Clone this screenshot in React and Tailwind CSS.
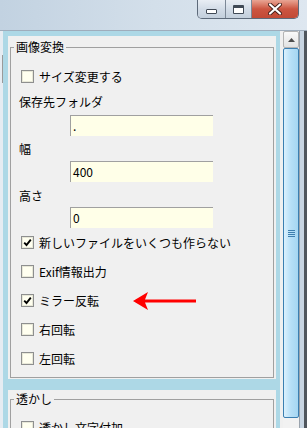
import React from 'react';

const font = { fontFamily: '"Noto Sans CJK JP", "Noto Sans", sans-serif' };

const CheckBox = ({ checked }) => (
  <span className="w-[13px] h-[13px] shrink-0 border border-[#8e8f8f] bg-[#fffff0] shadow-[inset_0_0_0_1px_#e8e8d8] flex items-center justify-center">
    {checked && (
      <svg width="9" height="9" viewBox="0 0 9 9">
        <path d="M1.2 4.6 L3.5 7 L7.8 1.6" stroke="#000" strokeWidth="1.9" fill="none" />
      </svg>
    )}
  </span>
);

const CheckRow = ({ label, checked, children }) => (
  <div className="h-[29px] flex items-center pl-[10px]">
    <CheckBox checked={checked} />
    <span className="ml-[5px]">{label}</span>
    {children}
  </div>
);

const Field = ({ value }) => (
  <div className="ml-[59px] w-[143px] h-[21px] bg-[#ffffe8] border-t border-l border-[#a0a0a0] flex items-center pl-[2px] leading-none">
    {value}
  </div>
);

const Arrow = () => (
  <svg className="ml-[34px]" width="64" height="22" viewBox="0 0 64 22">
    <polygon points="0,11 15,2 12,9.5 63,9.5 63,12.5 12,12.5 15,20" fill="#ff0000" />
  </svg>
);

const GroupPanel = ({ title, pt, pb, children }) => (
  <div className={`bg-[#f0f0f0] px-[2px] ${pt} ${pb}`}>
    <fieldset className="border border-[#a0a0a0]">
      <legend className="ml-[3px] px-[2px] leading-[16px]">{title}</legend>
      {children}
    </fieldset>
  </div>
);

export default function App() {
  return (
    <div
      className="w-[307px] h-[428px] overflow-hidden flex flex-col bg-[#dfe7f0] text-[12px] text-black"
      style={font}
    >
      {/* title bar */}
      <div className="h-[31px] shrink-0 border-b border-[#9fadbc] bg-gradient-to-r from-[#c2d2e1] via-[#d3dfea] to-[#dee7f0] flex justify-end pr-[8px]">
        <div className="flex h-[19px] border border-t-0 border-[#5d6a7a] rounded-b-[5px] overflow-hidden">
          <div className="w-[28px] bg-gradient-to-b from-[#e9eef4] via-[#d2dce7] to-[#c3cfdc] border-r border-[#7c8897] flex items-end justify-center pb-[4px]">
            <div className="w-[11px] h-[5px] bg-white border border-[#404a56] rounded-[1px]" />
          </div>
          <div className="w-[26px] bg-gradient-to-b from-[#e9eef4] via-[#d2dce7] to-[#c3cfdc] border-r border-[#7c8897] flex items-center justify-center">
            <div className="w-[11px] h-[9px] bg-white border border-[#404a56] border-t-[3px] rounded-[1px] mt-[1px]" />
          </div>
          <div className="w-[46px] bg-gradient-to-b from-[#e8a594] via-[#cc5541] to-[#c24a36] flex items-center justify-center">
            <svg width="14" height="12" viewBox="0 0 14 12">
              <path d="M2 1.5 L12 10.5 M12 1.5 L2 10.5" stroke="#46221c" strokeWidth="4" strokeLinecap="round" />
              <path d="M2 1.5 L12 10.5 M12 1.5 L2 10.5" stroke="#ffffff" strokeWidth="2.2" strokeLinecap="round" />
            </svg>
          </div>
        </div>
      </div>

      {/* client */}
      <div className="flex flex-1 min-h-0">
        <div className="w-[3px] shrink-0 bg-[#e6ecf2]">
          <div className="ml-[2px] mt-[24px] w-px h-[28px] bg-[#9a9a9a]" />
        </div>

        <div className="w-[277px] shrink-0 bg-[#add8e6] pl-[5px] pr-[4px] pt-[5px] flex flex-col gap-[11px]">
          <GroupPanel title="画像変換" pt="pt-[3px]" pb="pb-[1px]">
            <div className="pt-[7px] pb-[4px]">
              <CheckRow label="サイズ変更する" />
              <div className="mt-[3px] ml-[8px] leading-[16px]">保存先フォルダ</div>
              <div className="mt-[5px]"><Field value="." /></div>
              <div className="mt-[5px] ml-[8px] leading-[16px]">幅</div>
              <div className="mt-[4px]"><Field value="400" /></div>
              <div className="mt-[6px] ml-[8px] leading-[16px]">高さ</div>
              <div className="mt-[3px]"><Field value="0" /></div>
              <CheckRow label="新しいファイルをいくつも作らない" checked />
              <CheckRow label="Exif情報出力" />
              <CheckRow label="ミラー反転" checked>
                <Arrow />
              </CheckRow>
              <CheckRow label="右回転" />
              <CheckRow label="左回転" />
            </div>
          </GroupPanel>

          <GroupPanel title="透かし" pt="pt-[1px]" pb="pb-[1px]">
            <div className="pt-[6px]">
              <CheckRow label="透かし文字付加" />
            </div>
          </GroupPanel>
        </div>

        <div className="w-[3px] shrink-0 bg-[#f0f0f0]" />

        {/* scrollbar */}
        <div className="w-[16px] shrink-0 bg-[#eeeeee] flex flex-col">
          <div className="h-[17px] shrink-0 border border-[#b4b4b4] rounded-[2px] bg-gradient-to-b from-[#fafafa] to-[#e2e2e2] flex items-center justify-center">
            <svg width="7" height="4" viewBox="0 0 7 4">
              <polygon points="3.5,0 7,4 0,4" fill="#4d4d4d" />
            </svg>
          </div>
          <div className="h-[370px] shrink-0 border border-[#3c7fb1] rounded-[2px] bg-gradient-to-r from-[#dcf1fd] via-[#b6dff7] to-[#a5d6f2] flex items-center justify-center">
            <div className="flex flex-col gap-px">
              <div className="w-[7px] h-px bg-[#3f7fae]" />
              <div className="w-[7px] h-px bg-[#3f7fae]" />
              <div className="w-[7px] h-px bg-[#3f7fae]" />
              <div className="w-[7px] h-px bg-[#3f7fae]" />
            </div>
          </div>
          <div className="flex-1 bg-[#f2f2f2]" />
        </div>

        <div className="w-[5px] shrink-0 bg-[#c8d5e2] border-l border-[#9aa3ad]" />
        <div className="w-[3px] shrink-0 bg-[#50565d]" />
      </div>
    </div>
  );
}
